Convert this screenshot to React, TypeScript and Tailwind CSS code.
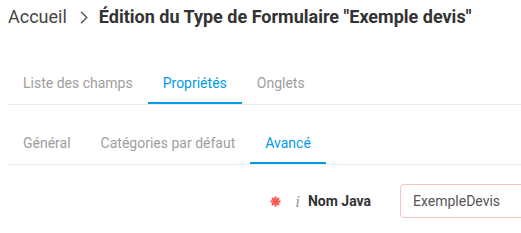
import React from 'react';

const font = { fontFamily: 'Roboto, "Liberation Sans", sans-serif' };

function Tab({ label, active }: { label: string; active?: boolean }) {
  return (
    <div
      className={`px-[15px] pt-[10px] pb-[9px] text-[14px] leading-[20px] border-b-2 ${
        active ? 'border-[#039be5] text-[#039be5]' : 'border-transparent text-[#9e9e9e]'
      }`}
    >
      {label}
    </div>
  );
}

export default function App() {
  return (
    <div className="w-[521px] h-[233px] overflow-hidden bg-white pl-[8px]" style={font}>
      <div className="flex items-center pt-[5px] h-[29px] text-[18px] leading-[24px]">
        <span className="text-[#444]">Accueil</span>
        <svg className="ml-[13px] mr-[11px]" width="8" height="13" viewBox="0 0 8 13" fill="none">
          <path d="M1 0.8 L6.8 6.5 L1 12.2" stroke="#555" strokeWidth="1.4" />
        </svg>
        <span className="font-bold text-[#333]">Édition du Type de Formulaire "Exemple devis"</span>
      </div>

      <div className="mt-[34px] flex border-b border-[#ececec]">
        <Tab label="Liste des champs" />
        <Tab label="Propriétés" active />
        <Tab label="Onglets" />
      </div>

      <div className="mt-[18px] flex border-b border-[#ececec]">
        <Tab label="Général" />
        <Tab label="Catégories par défaut" />
        <Tab label="Avancé" active />
      </div>

      <div className="mt-[19px] flex items-center">
        <div className="w-[363px] shrink-0 flex items-center justify-end">
          <svg width="11" height="11" viewBox="0 0 11 11" className="mr-[14px]">
            <g stroke="#f5584f" strokeWidth="2.2" strokeLinecap="butt">
              <line x1="5.5" y1="0.5" x2="5.5" y2="10.5" />
              <line x1="0.5" y1="5.5" x2="10.5" y2="5.5" />
              <line x1="2" y1="2" x2="9" y2="9" />
              <line x1="9" y1="2" x2="2" y2="9" />
            </g>
          </svg>
          <span
            className="italic text-[17px] leading-none text-[#9a9a9a] mr-[8px]"
            style={{ fontFamily: '"Liberation Serif", serif' }}
          >
            i
          </span>
          <span className="font-bold text-[14px] text-[#333]">Nom Java</span>
        </div>
        <div className="ml-[29px] w-[300px] h-[34px] shrink-0 rounded-[4px] border border-[#f5c4c4] flex items-center pl-[12px] text-[14px] text-[#555]">
          ExempleDevis
        </div>
      </div>
    </div>
  );
}
